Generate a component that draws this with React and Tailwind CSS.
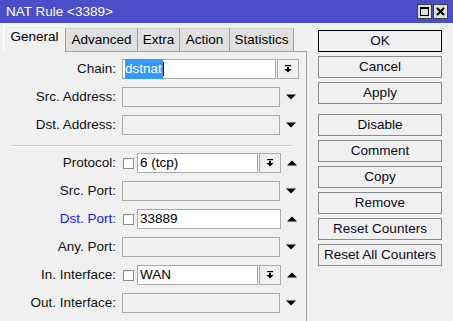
import React from "react";

const font = { fontFamily: '"Liberation Sans", Arial, sans-serif' };

function DropIcon() {
  return (
    <svg width="8" height="8" viewBox="0 0 8 8">
      <rect x="1" y="0" width="6" height="1.2" fill="#000" />
      <rect x="3" y="2" width="2" height="2" fill="#000" />
      <path d="M0.5 4 H7.5 L4 7.5 Z" fill="#000" />
    </svg>
  );
}

function Tri({ up }) {
  return (
    <svg width="10" height="6" viewBox="0 0 10 6" className="shrink-0">
      {up ? <path d="M0 5.5 H10 L5 0.5 Z" fill="#000" /> : <path d="M0 0.5 H10 L5 5.5 Z" fill="#000" />}
    </svg>
  );
}

function Label({ children, blue }) {
  return (
    <div
      className={
        "w-[117px] shrink-0 text-right pr-[1px] text-[13.5px] leading-none " +
        (blue ? "text-[#1a1ae6]" : "text-[#111]")
      }
    >
      {children}
    </div>
  );
}

function Row({ label, blue, children, first }) {
  return (
    <div className={"flex items-center h-[20px] " + (first ? "" : "mt-[8px]")}>
      <Label blue={blue}>{label}</Label>
      <div className="ml-[5px] flex items-center h-[20px]">{children}</div>
    </div>
  );
}

function Box({ w, filled, children }) {
  return (
    <div
      className={
        "h-[20px] border border-[#a9a9a9] flex items-center pl-[2px] text-[13.5px] text-black " +
        (filled ? "bg-white" : "bg-[#f0f0f0]")
      }
      style={{ width: w }}
    >
      {children}
    </div>
  );
}

function DropBtn() {
  return (
    <div className="ml-[1px] w-[22px] h-[20px] border border-[#a9a9a9] bg-[#f0f0f0] flex items-center justify-center">
      <DropIcon />
    </div>
  );
}

function Check() {
  return <div className="w-[11px] h-[11px] border border-[#8c8c8c] bg-white ml-[1px] mr-[3px]" />;
}

function Btn({ children, def, mt }) {
  return (
    <div
      className={
        "w-[124px] h-[22px] flex items-center justify-center text-[13.5px] text-[#0a0a1a] bg-[#f0f0f0] " +
        (def ? "border border-black " : "border border-[#8a8a8a] ") +
        (mt || "mt-[4px]")
      }
    >
      {children}
    </div>
  );
}

export default function App() {
  const tabs = [
    { t: "Advanced", w: "w-[72px]" },
    { t: "Extra", w: "w-[42px]" },
    { t: "Action", w: "w-[50px]" },
    { t: "Statistics", w: "w-[65px]" },
  ];
  return (
    <div className="w-[453px] h-[321px] bg-[#f0f0f0] flex flex-col overflow-hidden" style={font}>
      {/* Title bar */}
      <div className="h-[23px] bg-[#4a4ec8] flex items-center pl-[6px] pr-[5px]">
        <div className="text-white text-[13.5px] leading-none flex-1 pt-[1px]">NAT Rule &lt;3389&gt;</div>
        <div className="flex gap-[1px] items-center">
          <div className="w-[15px] h-[15px] bg-[#dcdcdc] border border-[#404040] flex items-center justify-center">
            <div className="w-[9px] h-[9px] border border-black border-t-2" />
          </div>
          <div className="w-[15px] h-[15px] bg-[#dcdcdc] border border-[#404040] flex items-center justify-center">
            <svg width="9" height="9" viewBox="0 0 9 9">
              <path d="M1 1 L8 8 M8 1 L1 8" stroke="#000" strokeWidth="2" />
            </svg>
          </div>
        </div>
      </div>

      <div className="flex flex-1">
        {/* Left column */}
        <div className="w-[307px] flex flex-col">
          <div className="h-[29px] flex items-end pl-[3px]">
            <div className="w-[62px] h-[27px] bg-[#f0f0f0] border-l border-t border-white flex items-center justify-center pb-[3px] text-[13.5px] text-black">
              General
            </div>
            {tabs.map((tb, i) => (
              <div
                key={tb.t}
                className={
                  tb.w +
                  " h-[24px] bg-[#e0e0e0] border-l border-[#a0a0a0] border-t border-t-[#d0d0d0] border-b border-b-[#a0a0a0] flex items-center justify-center text-[13.5px] text-black " +
                  (i === tabs.length - 1 ? "border-r border-r-[#a0a0a0]" : "")
                }
              >
                {tb.t}
              </div>
            ))}
            <div className="flex-1 h-[24px] border-b border-[#a0a0a0]" />
          </div>

          <div className="flex-1 border-r border-[#a0a0a0] pt-[7px] pr-[8px]">
            <Row label="Chain:" first>
              <Box w="154px" filled>
                <span className="bg-[#3399ff] text-white pr-[1px]">dstnat</span>
                <span className="w-px h-[14px] bg-black" />
              </Box>
              <DropBtn />
            </Row>
            <Row label="Src. Address:">
              <Box w="158px" />
              <div className="ml-[6px]"><Tri /></div>
            </Row>
            <Row label="Dst. Address:">
              <Box w="158px" />
              <div className="ml-[6px]"><Tri /></div>
            </Row>

            <div className="mt-[10px] ml-[11px] mr-[6px] h-px bg-[#d0d0d0]" />
            <div className="ml-[11px] mr-[6px] h-px bg-white" />

            <div className="mt-[6px]">
              <Row label="Protocol:" first>
                <Check />
                <Box w="121px" filled>6 (tcp)</Box>
                <DropBtn />
                <div className="ml-[6px]"><Tri up /></div>
              </Row>
            </div>
            <Row label="Src. Port:">
              <Box w="158px" />
              <div className="ml-[6px]"><Tri /></div>
            </Row>
            <Row label="Dst. Port:" blue>
              <Check />
              <Box w="144px" filled>33889</Box>
              <div className="ml-[6px]"><Tri up /></div>
            </Row>
            <Row label="Any. Port:">
              <Box w="158px" />
              <div className="ml-[6px]"><Tri /></div>
            </Row>
            <Row label="In. Interface:">
              <Check />
              <Box w="121px" filled>WAN</Box>
              <DropBtn />
              <div className="ml-[6px]"><Tri up /></div>
            </Row>
            <Row label="Out. Interface:">
              <Box w="158px" />
              <div className="ml-[6px]"><Tri /></div>
            </Row>
          </div>
        </div>

        {/* Right column */}
        <div className="ml-[11px] flex flex-col pt-[7px]">
          <Btn def mt="mt-0">OK</Btn>
          <Btn>Cancel</Btn>
          <Btn>Apply</Btn>
          <Btn mt="mt-[10px]">Disable</Btn>
          <Btn>Comment</Btn>
          <Btn>Copy</Btn>
          <Btn>Remove</Btn>
          <Btn>Reset Counters</Btn>
          <Btn>Reset All Counters</Btn>
        </div>
      </div>
    </div>
  );
}
